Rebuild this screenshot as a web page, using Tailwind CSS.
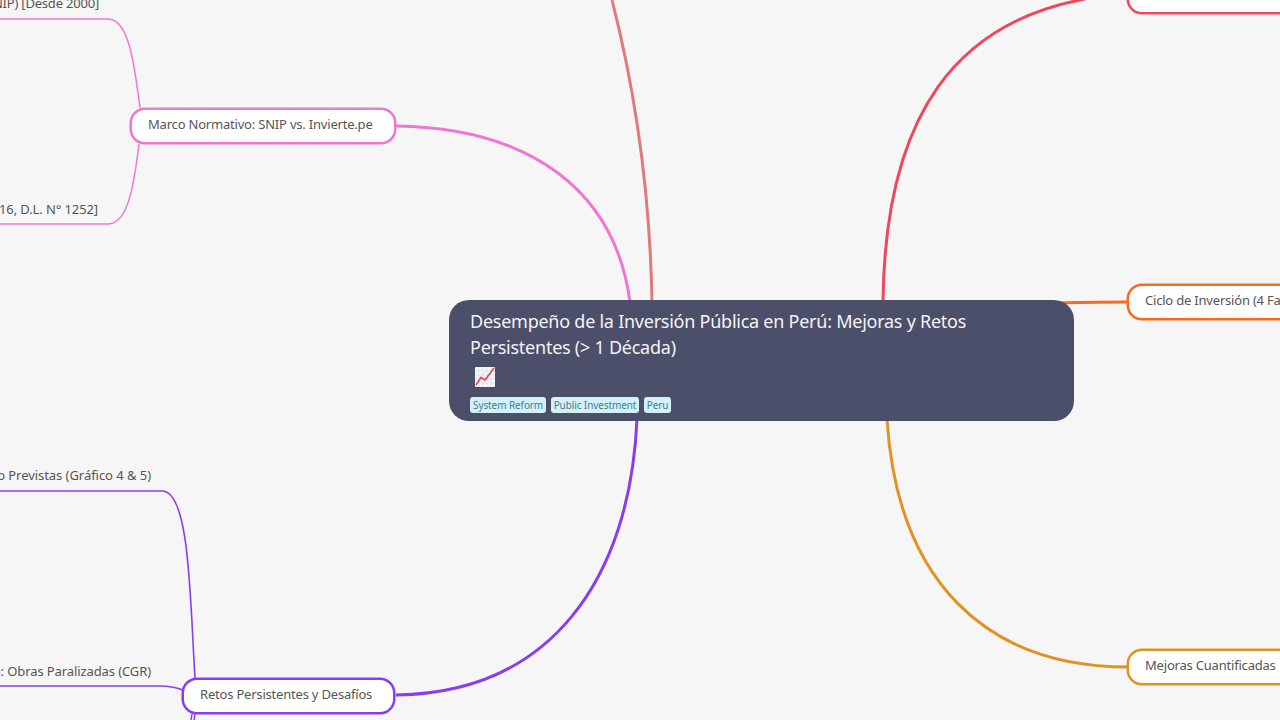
<!DOCTYPE html>
<html>
<head>
<meta charset="utf-8">
<script src="https://cdn.jsdelivr.net/npm/@tailwindcss/browser@4"></script>
</head>
<body class="m-0 bg-[#f6f6f6]">
<div class="relative w-[1280px] h-[720px] overflow-hidden bg-[#f6f6f6] font-['Noto_Sans','Liberation_Sans',sans-serif] text-[#555555]">
  <svg class="absolute left-0 top-0" width="1280" height="720" viewBox="0 0 1280 720" fill="none">
    <path d="M396 126 C530 128 615 190 630 302" stroke="#ee77d5" stroke-width="3"/>
    <path d="M612 0 C635 90 650 190 652 302" stroke="#e07a7a" stroke-width="3"/>
    <path d="M883 302 C885 110 960 22 1085 -1" stroke="#ec4a5c" stroke-width="3"/>
    <path d="M1060 303 C1085 302 1105 302 1128 302" stroke="#fb6a1c" stroke-width="3"/>
    <path d="M887 419 C897 580 985 667 1128 667" stroke="#e29220" stroke-width="3"/>
    <path d="M637 419 C630 580 550 693 396 695" stroke="#8a3df0" stroke-width="3"/>
    <path d="M140 108 C134 60 128 19 108 19 L0 19" stroke="#ee77d5" stroke-width="1.5"/>
    <path d="M139 144 C134 185 128 224 108 224 L0 224" stroke="#ee77d5" stroke-width="1.5"/>
    <path d="M195 678 C190 600 190 491 162 491 L0 491" stroke="#8a3df0" stroke-width="1.6"/>
    <path d="M183 690 C175 687 170 686 160 686 L0 686" stroke="#8a3df0" stroke-width="1.6"/>
    <path d="M192 714 L191 720 M195 714 L194 720" stroke="#8a3df0" stroke-width="1.5"/>
  </svg>

  <div class="absolute right-[1181px] top-[-6px] h-[18px] leading-[18px] text-[13px] tracking-[-0.2px] whitespace-nowrap">NIP) [Desde 2000]</div>
  <div class="absolute right-[1182px] top-[200px] h-[18px] leading-[18px] text-[13px] tracking-[-0.1px] whitespace-nowrap">2016, D.L. N° 1252]</div>
  <div class="absolute right-[1129px] top-[466px] h-[18px] leading-[18px] text-[13px] tracking-[-0.05px] whitespace-nowrap">no Previstas (Gráfico 4 &amp; 5)</div>
  <div class="absolute right-[1129px] top-[662px] h-[18px] leading-[18px] text-[13px] tracking-[-0.1px] whitespace-nowrap">n: Obras Paralizadas (CGR)</div>

  <div class="absolute left-[130px] top-[108px] w-[266px] h-[36px] flex items-center pl-[16px] pb-[3px] bg-white border-2 border-[#ee77d5] ring-[0.5px] ring-[#ee77d5] rounded-[15px] text-[13px] tracking-[-0.2px] whitespace-nowrap">Marco Normativo: SNIP vs. Invierte.pe</div>
  <div class="absolute left-[182px] top-[678px] w-[213px] h-[36px] flex items-center pl-[16px] pb-[3px] bg-white border-2 border-[#8a3df0] ring-[0.5px] ring-[#8a3df0] rounded-[15px] text-[13px] tracking-[-0.2px] whitespace-nowrap">Retos Persistentes y Desafíos</div>
  <div class="absolute left-[1127px] top-[-22px] w-[200px] h-[36px] bg-white border-2 border-[#ec4a5c] ring-[0.5px] ring-[#ec4a5c] rounded-[15px]"></div>
  <div class="absolute left-[1127px] top-[284px] w-[200px] h-[36px] flex items-center pl-[16px] pb-[3px] bg-white border-2 border-[#fb6a1c] ring-[0.5px] ring-[#fb6a1c] rounded-[15px] text-[13px] tracking-[-0.2px] whitespace-nowrap">Ciclo de Inversión (4 Fases)</div>
  <div class="absolute left-[1127px] top-[649px] w-[200px] h-[36px] flex items-center pl-[16px] pb-[3px] bg-white border-2 border-[#e29220] ring-[0.5px] ring-[#e29220] rounded-[15px] text-[13px] tracking-[-0.2px] whitespace-nowrap">Mejoras Cuantificadas</div>

  <div class="absolute left-[449px] top-[300px] w-[625px] h-[121px] bg-[#4c4f69] rounded-[20px] pl-[21px] pt-[8px] text-white">
    <div class="text-[18px] leading-[26px] tracking-[-0.25px] text-[#f4f4f6]">Desempeño de la Inversión Pública en Perú: Mejoras y Retos<br>Persistentes (&gt; 1 Década)</div>
    <div class="mt-[7px] ml-[5px] h-[20px]">
      <svg width="20" height="20" viewBox="0 0 20 20" class="block">
        <rect x="0" y="0" width="20" height="20" rx="1" fill="#f5f6f8"/>
        <path d="M0 4H20M0 8H20M0 12H20M0 16H20M4 0V20M8 0V20M12 0V20M16 0V20" stroke="#d8dce2" stroke-width="0.6"/>
        <path d="M1 18L6 10.5L10 13L19 1" stroke="#e8505b" stroke-width="1.8" fill="none"/>
      </svg>
    </div>
    <div class="mt-[10px] flex gap-[4.5px] text-[10px] leading-[16px] tracking-[-0.1px] text-[#3d7f96]">
      <span class="px-[3px] bg-[#d4f1f9] rounded-[3px]">System Reform</span>
      <span class="px-[3px] bg-[#d4f1f9] rounded-[3px]">Public Investment</span>
      <span class="px-[3px] bg-[#d4f1f9] rounded-[3px]">Peru</span>
    </div>
  </div>
</div>
</body>
</html>
